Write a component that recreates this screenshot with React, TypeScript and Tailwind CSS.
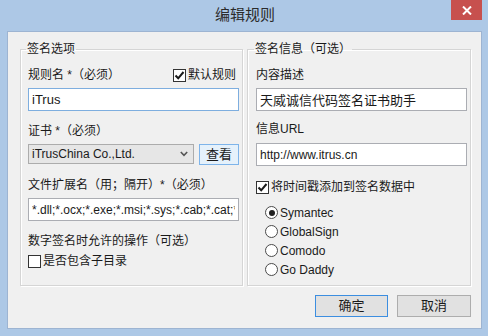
import React from 'react';

const font = "font-['Liberation_Sans','Noto_Sans_CJK_SC',sans-serif]";

function CheckBox({ checked, label }: { checked: boolean; label: string }) {
  return (
    <div className="flex items-center h-[16px]">
      <div className="w-[13px] h-[13px] border border-[#333] bg-white flex items-center justify-center">
        {checked && (
          <svg width="11" height="11" viewBox="0 0 11 11">
            <path d="M1.5 5.5 L4.2 8.3 L9.5 2" fill="none" stroke="#1a1a1a" strokeWidth="2" />
          </svg>
        )}
      </div>
      <span className="ml-[2px] text-[12px] leading-[16px] text-[#1a1a1a]">{label}</span>
    </div>
  );
}

function Radio({ checked, label }: { checked: boolean; label: string }) {
  return (
    <div className="flex items-center h-[19px] ml-[9px]">
      <div className="w-[13px] h-[13px] rounded-full border border-[#4a4a4a] bg-white flex items-center justify-center">
        {checked && <div className="w-[6px] h-[6px] rounded-full bg-[#1f1f1f]" />}
      </div>
      <span className="ml-[2px] text-[12px] leading-[16px] text-[#1a1a1a]">{label}</span>
    </div>
  );
}

function TextBox({ value, focused, className = '' }: { value: string; focused?: boolean; className?: string }) {
  return (
    <input
      readOnly
      value={value}
      className={`h-[23px] w-[211px] px-[3px] bg-white border text-[12px] text-[#1a1a1a] outline-none ${
        focused ? 'border-[#7eaedf]' : 'border-[#abadb3]'
      } ${className}`}
    />
  );
}

function Label({ text, className = '' }: { text: string; className?: string }) {
  return <div className={`h-[16px] text-[12px] leading-[16px] text-[#1a1a1a] ${className}`}>{text}</div>;
}

export default function App() {
  return (
    <div className={`w-[488px] h-[336px] bg-[#adc8e6] flex flex-col relative ${font}`}>
      {/* Title bar */}
      <div className="h-[31px] flex items-center justify-center">
        <span className="text-[15px] text-[#2b2b2b] ml-[2px]">编辑规则</span>
      </div>
      <div className="absolute top-0 right-[6px] w-[31px] h-[20px] bg-[#c7504e] flex items-center justify-center">
        <svg width="10" height="9" viewBox="0 0 10 9">
          <path d="M1 0.5 L9 8.5 M9 0.5 L1 8.5" stroke="#fff" strokeWidth="2" />
        </svg>
      </div>

      {/* Client area */}
      <div className="ml-[7px] w-[475px] h-[298px] border border-[#9db4d2] bg-[#f0f0f0] flex flex-col">
        <div className="flex pt-[9px] pl-[12px] gap-[4px]">
          {/* Left group */}
          <fieldset className="w-[223px] h-[245px] border border-[#d5d5d5] shadow-[inset_1px_1px_0_#fff,1px_1px_0_#fff] pl-[7px]">
            <legend className="-ml-[2px] px-[1px] text-[12px] leading-[16px] text-[#1a1a1a]">签名选项</legend>
            <div className="mt-[10px] w-[211px] flex justify-between">
              <Label text="规则名 *（必须）" />
              <div className="mr-[3px]">
                <CheckBox checked label="默认规则" />
              </div>
            </div>
            <TextBox value="iTrus" focused className="mt-[5px] text-[13px]" />
            <Label text="证书 *（必须）" className="mt-[12px]" />
            <div className="mt-[5px] flex gap-[5px] w-[211px]">
              <div className="w-[166px] h-[20px] border border-[#acacac] bg-[#e6e6e6] flex items-center justify-between pl-[3px] pr-[5px]">
                <span className="text-[12px] text-[#1a1a1a]">iTrusChina Co.,Ltd.</span>
                <svg width="8" height="6" viewBox="0 0 8 6">
                  <path d="M0.8 1 L4 4.3 L7.2 1" fill="none" stroke="#555" strokeWidth="1.6" />
                </svg>
              </div>
              <div className="w-[40px] h-[21px] border border-[#7eb4ea] bg-[#e5f1fb] flex items-center justify-center text-[13px] text-[#1a1a1a]">
                查看
              </div>
            </div>
            <Label text="文件扩展名（用；隔开）*（必须）" className="mt-[12px]" />
            <TextBox value="*.dll;*.ocx;*.exe;*.msi;*.sys;*.cab;*.cat;*.js" className="mt-[5px]" />
            <Label text="数字签名时允许的操作（可选）" className="mt-[12px]" />
            <div className="mt-[4px]">
              <CheckBox checked={false} label="是否包含子目录" />
            </div>
          </fieldset>

          {/* Right group */}
          <fieldset className="w-[224px] h-[245px] border border-[#d5d5d5] shadow-[inset_1px_1px_0_#fff,1px_1px_0_#fff] pl-[8px]">
            <legend className="-ml-[2px] px-[1px] text-[12px] leading-[16px] text-[#1a1a1a]">签名信息（可选）</legend>
            <Label text="内容描述" className="mt-[10px]" />
            <TextBox value="天威诚信代码签名证书助手" className="mt-[5px] text-[13px]" />
            <Label text="信息URL" className="mt-[9px]" />
            <TextBox value="http://www.itrus.cn" className="mt-[6px]" />
            <div className="mt-[13px]">
              <CheckBox checked label="将时间戳添加到签名数据中" />
            </div>
            <div className="mt-[8px] flex flex-col">
              <Radio checked label="Symantec" />
              <Radio checked={false} label="GlobalSign" />
              <Radio checked={false} label="Comodo" />
              <Radio checked={false} label="Go Daddy" />
            </div>
          </fieldset>
        </div>

        {/* Buttons */}
        <div className="mt-[9px] flex justify-end gap-[9px] pr-[10px]">
          <div className="w-[73px] h-[22px] border border-[#3c8ee0] bg-[#e1e1e1] flex items-center justify-center text-[13px] text-[#1a1a1a]">
            确定
          </div>
          <div className="w-[74px] h-[22px] border border-[#adadad] bg-[#e1e1e1] flex items-center justify-center text-[13px] text-[#1a1a1a]">
            取消
          </div>
        </div>
      </div>
    </div>
  );
}
